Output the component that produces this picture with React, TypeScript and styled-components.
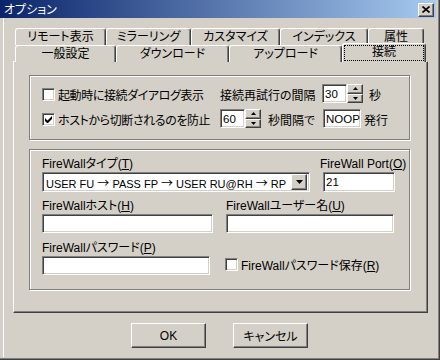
import React from 'react';
import styled, { createGlobalStyle } from 'styled-components';

const GlobalStyle = createGlobalStyle`
  html, body {
    margin: 0;
    padding: 0;
    background: #d4d0c8;
  }
  body {
    font-family: "Liberation Sans", "Noto Sans CJK JP", sans-serif;
    font-size: 12px;
    color: #000;
    font-feature-settings: "palt";
  }
  * {
    box-sizing: border-box;
  }
`;

const Window = styled.div`
  width: 440px;
  height: 360px;
  background: #d4d0c8;
  display: flex;
  flex-direction: column;
  box-shadow: inset -1px -1px #404040, inset -2px -2px #808080;
`;

const TitleBar = styled.div`
  height: 18px;
  margin-right: 4px;
  padding: 1px 2px 0 4px;
  display: flex;
  align-items: center;
  justify-content: space-between;
  background: linear-gradient(to right, #0a246a, #a6caf0);
  color: #fff;
  font-size: 12px;
`;

const TitleText = styled.span`
  line-height: 14px;
`;

const RaisedButton = styled.button`
  display: flex;
  align-items: center;
  justify-content: center;
  padding: 0;
  margin: 0;
  background: #d4d0c8;
  border: 1px solid;
  border-color: #fff #404040 #404040 #fff;
  box-shadow: inset -1px -1px #808080;
  font: inherit;
  color: #000;
`;

const CloseButton = styled(RaisedButton)`
  width: 16px;
  height: 14px;
`;

const Body = styled.div`
  flex: 1;
  margin: 0 0 3px 3px;
  border-left: 1px solid #fff;
  padding: 10px 0 0 9px;
  display: flex;
  flex-direction: column;
`;

const TabRow = styled.div<{ $h: number }>`
  display: flex;
  align-items: flex-start;
  height: ${({ $h }) => $h}px;
  margin-left: 2px;
  position: relative;
`;

const Tab = styled.div<{ $w: number; $active?: boolean }>`
  width: ${({ $w }) => $w}px;
  height: ${({ $active }) => ($active ? 19 : 17)}px;
  margin-top: ${({ $active }) => ($active ? -2 : 0)}px;
  padding: 1px;
  background: #d4d0c8;
  border-left: 1px solid #fff;
  border-top: 1px solid #fff;
  border-right: 1px solid #404040;
  border-radius: 3px 3px 0 0;
  box-shadow: inset -1px 0 #808080;
  display: flex;
  align-items: stretch;
  justify-content: stretch;
  position: relative;
  z-index: ${({ $active }) => ($active ? 2 : 1)};
  white-space: nowrap;
`;

const TabLabel = styled.span<{ $focus?: boolean }>`
  flex: 1;
  display: flex;
  align-items: center;
  justify-content: center;
  line-height: 13px;
  border: 1px dotted ${({ $focus }) => ($focus ? '#000' : 'transparent')};
  padding-bottom: ${({ $focus }) => ($focus ? 2 : 0)}px;
`;

const Panel = styled.div`
  width: 415px;
  height: 252px;
  border-left: 1px solid #fff;
  border-top: 1px solid #fff;
  border-right: 1px solid #404040;
  border-bottom: 1px solid #404040;
  box-shadow: inset -1px -1px #808080;
  padding: 13px 0 0 15px;
  display: flex;
  flex-direction: column;
  gap: 9px;
`;

const Group = styled.div<{ $h: number; $pad: string }>`
  width: 381px;
  height: ${({ $h }) => $h}px;
  border: 1px solid #808080;
  box-shadow: inset 1px 1px #fff, 1px 1px #fff;
  padding: ${({ $pad }) => $pad};
  display: flex;
  flex-direction: column;
`;

const OptionRow = styled.div<{ $mt?: number }>`
  display: flex;
  align-items: center;
  height: 19px;
  margin-top: ${({ $mt }) => $mt ?? 0}px;
`;

const CheckCell = styled.label<{ $w?: number }>`
  display: flex;
  align-items: center;
  gap: 3px;
  width: ${({ $w }) => ($w ? `${$w}px` : 'auto')};
  padding-top: 2px;
  white-space: nowrap;
  letter-spacing: -0.4px;
`;

const Text = styled.span<{ $w?: number }>`
  display: inline-block;
  width: ${({ $w }) => ($w ? `${$w}px` : 'auto')};
  padding-top: 2px;
  white-space: nowrap;
`;

const sunken = `
  background: #fff;
  border: 1px solid;
  border-color: #808080 #fff #fff #808080;
  box-shadow: inset 1px 1px #404040, inset -1px -1px #d4d0c8;
`;

const CheckBox = styled.span`
  ${sunken}
  width: 13px;
  height: 13px;
  flex: none;
  display: flex;
  align-items: center;
  justify-content: center;
`;

const EditBox = styled.div<{ $w?: number; $h?: number }>`
  ${sunken}
  width: ${({ $w }) => ($w ? `${$w}px` : '100%')};
  height: ${({ $h }) => $h ?? 19}px;
  padding: 0 2px;
  display: flex;
  align-items: center;
  font-size: 11.5px;
  white-space: nowrap;
  overflow: hidden;
  flex: none;
`;

const Spinner = styled.div`
  width: 16px;
  height: 19px;
  display: flex;
  flex-direction: column;
  flex: none;
`;

const SpinButton = styled(RaisedButton)`
  flex: 1;
  width: 16px;
`;

const Combo = styled.div`
  ${sunken}
  width: 100%;
  height: 20px;
  padding: 0 2px 0 3px;
  display: flex;
  align-items: center;
  white-space: nowrap;
`;

const ComboText = styled.span`
  flex: 1;
  overflow: hidden;
  font-size: 11px;
`;

const RightArrow = styled.span`
  font-family: "Noto Sans CJK JP", sans-serif;
  font-size: 12px;
  font-feature-settings: normal;
`;

const DropButton = styled(RaisedButton)`
  width: 16px;
  height: 16px;
  flex: none;
`;

const FieldRow = styled.div<{ $gap: number; $mt?: number }>`
  display: flex;
  gap: ${({ $gap }) => $gap}px;
  margin-top: ${({ $mt }) => $mt ?? 0}px;
`;

const Field = styled.div<{ $w: number }>`
  width: ${({ $w }) => $w}px;
  display: flex;
  flex-direction: column;
`;

const FieldLabel = styled.span`
  line-height: 14px;
  height: 14px;
  margin-bottom: 1px;
  white-space: nowrap;
`;

const SaveCheck = styled(CheckCell)`
  align-self: flex-end;
  margin-bottom: 2px;
  padding-top: 0;
  letter-spacing: 0;
`;

const ButtonRow = styled.div`
  display: flex;
  gap: 27px;
  padding-left: 118px;
  margin-top: 10px;
`;

const DialogButton = styled(RaisedButton)`
  width: 75px;
  height: 25px;
`;

const rowOneTabs = [
  { label: 'リモート表示', width: 91 },
  { label: 'ミラーリング', width: 85 },
  { label: 'カスタマイズ', width: 89 },
  { label: 'インデックス', width: 88 },
  { label: '属性', width: 56 },
];

const rowTwoTabs = [
  { label: '一般設定', width: 101 },
  { label: 'ダウンロード', width: 113 },
  { label: 'アップロード', width: 113 },
  { label: '接続', width: 84, active: true },
];

const firewallType = ['USER FU', 'PASS FP', 'USER RU@RH', 'RP'];

const CheckMark = () => (
  <svg width="7" height="7" viewBox="0 0 7 7">
    <path d="M0 2v3l2 2h1l4-4V0L2.5 4.5z" fill="#000" />
  </svg>
);

const Arrow = ({ up, big }: { up?: boolean; big?: boolean }) => {
  const w = big ? 7 : 5;
  const h = big ? 4 : 3;
  return (
    <svg width={w} height={h} viewBox={`0 0 ${w} ${h}`}>
      <path d={up ? `M${w / 2} 0L${w} ${h}H0z` : `M0 0h${w}L${w / 2} ${h}z`} fill="#000" />
    </svg>
  );
};

const Check = ({ checked, children, width }: { checked?: boolean; children: React.ReactNode; width?: number }) => (
  <CheckCell $w={width}>
    <CheckBox>{checked && <CheckMark />}</CheckBox>
    {children}
  </CheckCell>
);

const NumberInput = ({ value }: { value: string }) => (
  <>
    <EditBox $w={25}>{value}</EditBox>
    <Spinner>
      <SpinButton><Arrow up /></SpinButton>
      <SpinButton><Arrow /></SpinButton>
    </Spinner>
  </>
);

const App: React.FC = () => (
  <>
    <GlobalStyle />
    <Window>
      <TitleBar>
        <TitleText>オプション</TitleText>
        <CloseButton aria-label="閉じる">
          <svg width="8" height="7" viewBox="0 0 8 7">
            <path d="M0.5 0.5l7 6M7.5 0.5l-7 6" stroke="#000" strokeWidth="1.6" />
          </svg>
        </CloseButton>
      </TitleBar>
      <Body>
        <TabRow $h={17}>
          {rowOneTabs.map((t) => (
            <Tab key={t.label} $w={t.width}>
              <TabLabel>{t.label}</TabLabel>
            </Tab>
          ))}
        </TabRow>
        <TabRow $h={16}>
          {rowTwoTabs.map((t) => (
            <Tab key={t.label} $w={t.width} $active={t.active}>
              <TabLabel $focus={t.active}>{t.label}</TabLabel>
            </Tab>
          ))}
        </TabRow>
        <Panel>
          <Group $h={65} $pad="8px 0 0 12px">
            <OptionRow>
              <Check width={178}>起動時に接続ダイアログ表示</Check>
              <Text $w={102}>接続再試行の間隔</Text>
              <NumberInput value="30" />
              <Text style={{ marginLeft: 6 }}>秒</Text>
            </OptionRow>
            <OptionRow $mt={6}>
              <Check checked width={178}>ホストから切断されるのを防止</Check>
              <NumberInput value="60" />
              <Text $w={62} style={{ paddingLeft: 7 }}>秒間隔で</Text>
              <EditBox $w={38}>NOOP</EditBox>
              <Text style={{ marginLeft: 3 }}>発行</Text>
            </OptionRow>
          </Group>
          <Group $h={141} $pad="7px 0 0 12px">
            <FieldRow $gap={10}>
              <Field $w={268}>
                <FieldLabel>FireWallタイプ(<u>T</u>)</FieldLabel>
                <Combo>
                  <ComboText>
                    {firewallType.map((step, i) => (
                      <React.Fragment key={step}>
                        {i > 0 && <> <RightArrow>→</RightArrow> </>}
                        {step}
                      </React.Fragment>
                    ))}
                  </ComboText>
                  <DropButton><Arrow big /></DropButton>
                </Combo>
              </Field>
              <Field $w={75}>
                <FieldLabel>FireWall Port(<u>O</u>)</FieldLabel>
                <EditBox $w={72} $h={20} style={{ marginLeft: 3 }}>21</EditBox>
              </Field>
            </FieldRow>
            <FieldRow $gap={13} $mt={7}>
              <Field $w={171}>
                <FieldLabel>FireWallホスト(<u>H</u>)</FieldLabel>
                <EditBox />
              </Field>
              <Field $w={168}>
                <FieldLabel>FireWallユーザー名(<u>U</u>)</FieldLabel>
                <EditBox />
              </Field>
            </FieldRow>
            <FieldRow $gap={15} $mt={8}>
              <Field $w={168}>
                <FieldLabel>FireWallパスワード(<u>P</u>)</FieldLabel>
                <EditBox />
              </Field>
              <SaveCheck>
                <CheckBox />
                <span>FireWallパスワード保存(<u>R</u>)</span>
              </SaveCheck>
            </FieldRow>
          </Group>
        </Panel>
        <ButtonRow>
          <DialogButton>OK</DialogButton>
          <DialogButton>キャンセル</DialogButton>
        </ButtonRow>
      </Body>
    </Window>
  </>
);

export default App;
